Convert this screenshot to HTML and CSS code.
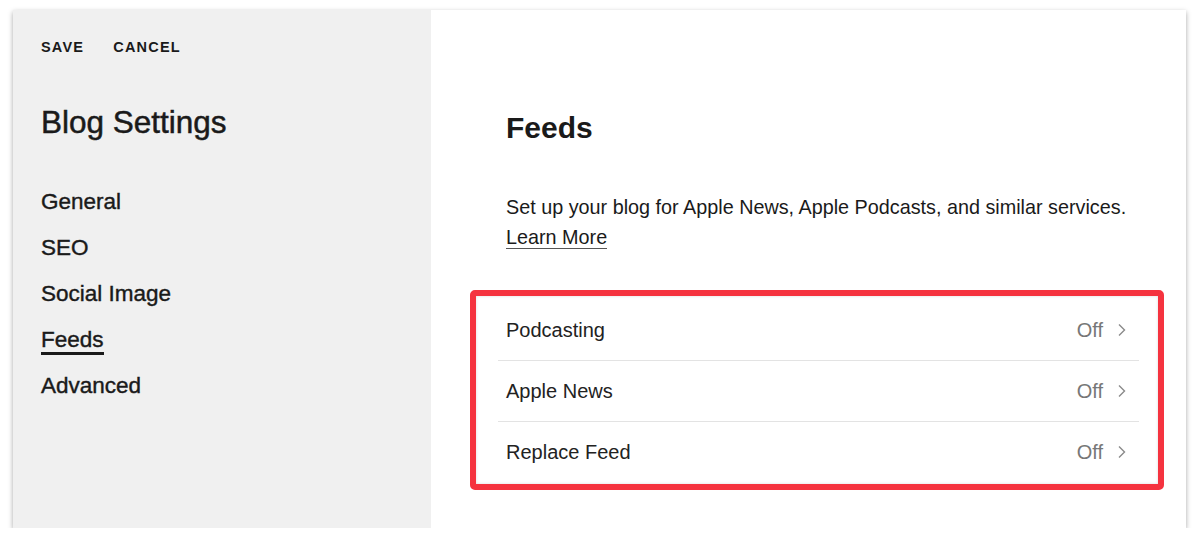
FILE: index.html
```html
<!DOCTYPE html>
<html lang="en">
<head>
    <meta charset="UTF-8">
    <meta name="viewport" content="width=device-width, initial-scale=1.0">
    <title>Blog Settings - Feeds</title>
    <link rel="stylesheet" href="styles.css">
</head>
<body>
    <div class="window">
        <div class="sidebar">
            <div class="actions">
                <button class="action">Save</button>
                <button class="action">Cancel</button>
            </div>
            <h2 class="sidebar-title">Blog Settings</h2>
            <nav class="nav">
                <a class="nav-item">General</a>
                <a class="nav-item">SEO</a>
                <a class="nav-item">Social Image</a>
                <a class="nav-item active">Feeds</a>
                <a class="nav-item">Advanced</a>
            </nav>
        </div>

        <div class="main">
            <div class="intro">
                <h1 class="main-title">Feeds</h1>
                <p class="description">Set up your blog for Apple News, Apple Podcasts, and similar services.<br><a class="learn-more">Learn More</a></p>
            </div>

            <div class="highlight">
                <div class="options">
                    <div class="option">
                        <span class="option-label">Podcasting</span>
                        <span class="option-value">Off
                            <svg class="chevron" width="10" height="14" viewBox="0 0 10 14"><path d="M2 1.5 L7.5 7 L2 12.5" fill="none" stroke="#8a8a8a" stroke-width="1.4"/></svg>
                        </span>
                    </div>
                    <div class="option">
                        <span class="option-label">Apple News</span>
                        <span class="option-value">Off
                            <svg class="chevron" width="10" height="14" viewBox="0 0 10 14"><path d="M2 1.5 L7.5 7 L2 12.5" fill="none" stroke="#8a8a8a" stroke-width="1.4"/></svg>
                        </span>
                    </div>
                    <div class="option">
                        <span class="option-label">Replace Feed</span>
                        <span class="option-value">Off
                            <svg class="chevron" width="10" height="14" viewBox="0 0 10 14"><path d="M2 1.5 L7.5 7 L2 12.5" fill="none" stroke="#8a8a8a" stroke-width="1.4"/></svg>
                        </span>
                    </div>
                </div>
            </div>
        </div>
    </div>
</body>
</html>
```

FILE: styles.css
```css
body {
    margin: 0;
    background: #ffffff;
    font-family: "Liberation Sans", Arial, sans-serif;
    color: #1a1a1a;
}
.window {
    display: flex;
    width: 1173px;
    height: 518px;
    margin: 10px 0 0 13px;
    background: #ffffff;
    box-shadow: 0 2px 5px rgba(0,0,0,0.35);
}
.sidebar {
    width: 390px;
    flex-shrink: 0;
    background: #f0f0f0;
    padding: 0 0 0 28px;
}
.actions {
    display: flex;
    gap: 29px;
    padding-top: 29px;
}
.action {
    padding: 0;
    border: none;
    background: none;
    font-family: inherit;
    font-size: 14.5px;
    font-weight: bold;
    letter-spacing: 1.2px;
    text-transform: uppercase;
    color: #1a1a1a;
    line-height: 16px;
    cursor: pointer;
}
.sidebar-title {
    margin: 49px 0 0 0;
    font-size: 31.5px;
    font-weight: normal;
    line-height: 36px;
    -webkit-text-stroke: 0.5px #1a1a1a;
}
.nav {
    display: flex;
    flex-direction: column;
    align-items: flex-start;
    margin-top: 49px;
    gap: 20px;
}
.nav-item {
    font-size: 22.5px;
    line-height: 26px;
    color: #1a1a1a;
    cursor: pointer;
    -webkit-text-stroke: 0.4px #1a1a1a;
}
.nav-item.active {
    position: relative;
}
.nav-item.active::after {
    content: "";
    position: absolute;
    left: 0;
    right: 0;
    bottom: -2px;
    height: 3px;
    background: #1a1a1a;
}
.main {
    flex: 1;
    padding: 0 22px 0 39px;
}
.intro {
    padding-left: 36px;
}
.main-title {
    margin: 100px 0 0 0;
    font-size: 30px;
    font-weight: bold;
    line-height: 36px;
}
.description {
    margin: 46px 0 0 0;
    font-size: 19.8px;
    line-height: 30px;
    color: #1a1a1a;
}
.learn-more {
    display: inline-block;
    line-height: 22px;
    border-bottom: 1px solid #555;
    cursor: pointer;
}
.highlight {
    margin-top: 38px;
    border: 6px solid #f5333f;
    border-radius: 5px;
    padding: 4px 19px 2px 22px;
    box-shadow: inset 0 0 3px rgba(0,0,0,0.15);
}
.option {
    display: flex;
    align-items: center;
    justify-content: space-between;
    height: 60px;
    padding: 0 12px 0 8px;
    border-bottom: 1px solid #e3e3e3;
}
.option:last-child {
    border-bottom: none;
}
.option-label {
    font-size: 20px;
    color: #222;
}
.option-value {
    display: flex;
    align-items: center;
    gap: 14px;
    font-size: 20px;
    color: #777;
}
```
